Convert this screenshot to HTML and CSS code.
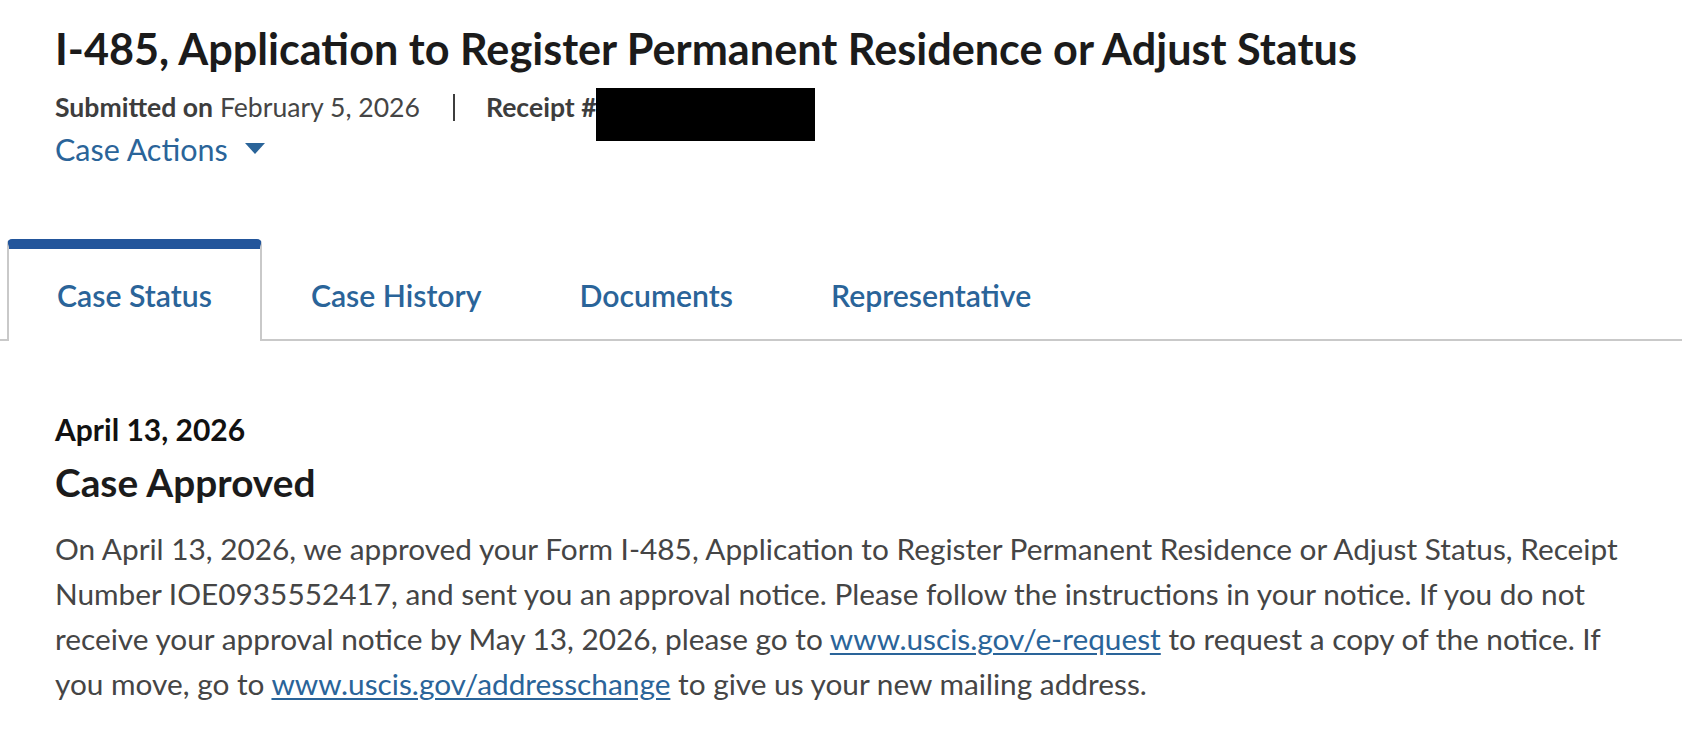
FILE: index.html
```html
<!DOCTYPE html>
<html lang="en">
<head>
<meta charset="utf-8">
<title>I-485 Case Status</title>
<link rel="stylesheet" href="styles.css">
</head>
<body>
<header class="case-header">
  <h1 class="case-title">I-485, Application to Register Permanent Residence or Adjust Status</h1>
  <div class="case-meta">
    <span class="meta-item"><strong>Submitted on</strong> February 5, 2026</span>
    <span class="meta-divider"></span>
    <span class="meta-item meta-receipt"><strong>Receipt #</strong><span class="redacted" aria-label="redacted"></span></span>
  </div>
  <button class="case-actions" type="button">Case Actions
    <svg class="caret" width="20" height="11" viewBox="0 0 20 11" aria-hidden="true"><path d="M0 0 H20 L10 11 Z" fill="currentColor"/></svg>
  </button>
</header>

<nav class="tabs">
  <a class="tab tab-active" href="#">Case Status</a>
  <a class="tab" href="#">Case History</a>
  <a class="tab" href="#">Documents</a>
  <a class="tab" href="#">Representative</a>
</nav>

<section class="status">
  <div class="status-date">April 13, 2026</div>
  <h2 class="status-title">Case Approved</h2>
  <p class="status-text">On April 13, 2026, we approved your Form I-485, Application to Register Permanent Residence or Adjust Status, Receipt Number IOE0935552417, and sent you an approval notice. Please follow the instructions in your notice. If you do not receive your approval notice by May 13, 2026, please go to <a href="#">www.uscis.gov/e-request</a> to request a copy of the notice. If you move, go to <a href="#">www.uscis.gov/addresschange</a> to give us your new mailing address.</p>
</section>
</body>
</html>
```

FILE: styles.css
```css
* { box-sizing: border-box; }

body {
  margin: 0;
  background: #fff;
  font-family: Lato, "Noto Sans", sans-serif;
  color: #1b1b1b;
}

.case-header {
  padding: 22px 55px 0;
}

.case-title {
  margin: 0;
  font-size: 43.2px;
  line-height: 52px;
  font-weight: 700;
  color: #1b1b1b;
}

.case-meta {
  display: flex;
  align-items: center;
  margin-top: 14px;
  height: 38px;
  font-size: 26.6px;
  line-height: 38px;
  color: #454545;
}

.meta-item strong {
  font-weight: 700;
  color: #3d3d3d;
}

.meta-receipt {
  position: relative;
}

.meta-divider {
  width: 2px;
  height: 27px;
  background: #3d3d3d;
  margin: 0 31px 0 33px;
}

.redacted {
  position: absolute;
  left: 110px;
  top: 0;
  width: 219px;
  height: 53px;
  background: #000;
}

.case-actions {
  display: flex;
  align-items: center;
  gap: 17px;
  margin-top: 5px;
  padding: 0;
  border: 0;
  background: none;
  font-family: inherit;
  font-size: 30.5px;
  line-height: 36px;
  color: #2a6499;
  cursor: pointer;
}

.caret { display: block; margin-top: -2px; }

.tabs {
  display: flex;
  margin-top: 72px;
  padding-left: 7px;
  border-bottom: 2px solid #c9c9c9;
}

.tab {
  display: block;
  padding: 28px 47px 28px;
  border: 2px solid transparent;
  border-top: 10px solid transparent;
  border-bottom: 0;
  margin-bottom: -2px;
  font-size: 30.2px;
  line-height: 36px;
  color: #2a6499;
  text-decoration: none;
  font-weight: 600;
}

.tab-active {
  background: #fff;
  border-color: #c9c9c9;
  border-top-color: #22559b;
  border-radius: 5px 5px 0 0;
  padding-left: 48px;
  padding-right: 48px;
}

.status {
  padding: 72px 42px 0 55px;
}

.status-date {
  font-size: 30px;
  line-height: 32px;
  font-weight: 700;
  color: #111;
}

.status-title {
  margin: 15px 0 0;
  font-size: 38.8px;
  line-height: 44px;
  font-weight: 700;
  color: #1b1b1b;
}

.status-text {
  margin: 22px 0 0;
  font-size: 29.8px;
  line-height: 45px;
  color: #454545;
}

.status-text a {
  color: #2a6499;
  text-decoration: underline;
  text-underline-offset: 3px;
}
```
